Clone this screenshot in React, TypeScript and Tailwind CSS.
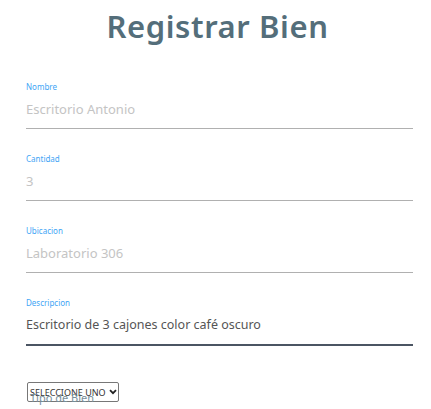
import React from "react";

const fields = [
  { label: "Nombre", value: "Escritorio Antonio", filled: false },
  { label: "Cantidad", value: "3", filled: false },
  { label: "Ubicacion", value: "Laboratorio 306", filled: false },
  { label: "Descripcion", value: "Escritorio de 3 cajones color café oscuro", filled: true },
];

export default function App() {
  return (
    <div className="w-[431px] h-[409px] bg-white overflow-hidden" style={{ fontFamily: '"Noto Sans", "Open Sans", sans-serif' }}>
      <h1 className="text-center text-[31px] font-semibold text-[#546e7a] leading-none pt-[11px] tracking-[0.6px] pl-[4px]">Registrar Bien</h1>
      <div className="ml-[26px] w-[387px] mt-[41px] flex flex-col">
        {fields.map((f) => (
          <div key={f.label} className="h-[72px] flex flex-col">
            <div className="text-[8px] leading-none text-[#42a5f5] h-[10px]">{f.label}</div>
            <div className={`mt-[8px] leading-[16px] ${f.filled ? "text-[12.5px] text-[#555]" : "text-[13px] text-[#c4c4c4]"}`}>{f.value}</div>
            <div className={`mt-[11px] ${f.filled ? "h-[2px] bg-[#4b5563]" : "h-px bg-[#b0b0b0]"}`} />
          </div>
        ))}
        <div className="relative mt-[11px] ml-[1px] w-[92px] h-[20px] border border-[#777] rounded-[2px] flex items-center pl-[2px]">
          <span className="text-[9px] text-[#333] leading-none">SELECCIONE UNO</span>
          <svg className="ml-[3px]" width="8" height="6" viewBox="0 0 8 6"><path d="M1 1.2 L4 4.2 L7 1.2" fill="none" stroke="#222" strokeWidth="1.8"/></svg>
          <span className="absolute left-[2px] top-[9px] text-[11px] leading-none text-[#78909c]">Tipo de Bien</span>
        </div>
      </div>
    </div>
  );
}
